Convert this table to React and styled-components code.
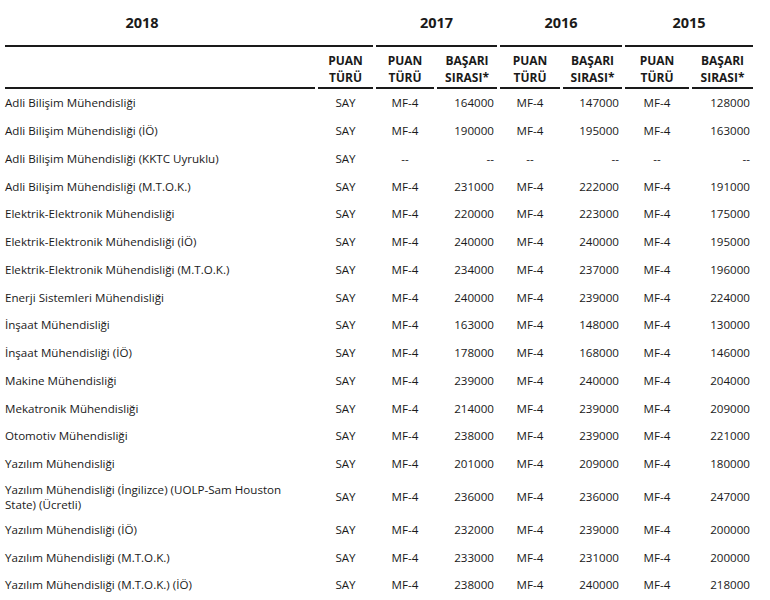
import React from 'react';
import styled, { createGlobalStyle } from 'styled-components';

const GlobalStyle = createGlobalStyle`
  body {
    margin: 0;
    background: #fff;
    font-family: "Open Sans", "Noto Sans", sans-serif;
    color: #1a1a1a;
  }
`;

const Table = styled.table`
  border-collapse: separate;
  border-spacing: 3px 0;
  margin-left: 2px;
  table-layout: fixed;
  font-size: 11.6px;
`;

const YearCell = styled.th`
  height: 45px;
  padding: 0 ${props => props.$shift || 0}px 0 0;
  font-size: 14.5px;
  font-weight: 700;
  text-align: center;
  vertical-align: middle;
  border-bottom: 2px solid #1a1a1a;
`;

const LabelCell = styled.th`
  height: 37px;
  padding: 3px 0 0;
  font-size: 12px;
  font-weight: 700;
  line-height: 17px;
  text-align: center;
  vertical-align: middle;
  border-bottom: 2px solid #1a1a1a;
`;

const Row = styled.tr`
  height: 27.75px;
`;

const Cell = styled.td`
  padding: 4px ${props => (props.$align === 'right' ? '3px' : '0')} 4px 0;
  line-height: 15px;
  text-align: ${props => props.$align || 'center'};
  vertical-align: middle;
  white-space: ${props => (props.$wrap ? 'normal' : 'nowrap')};
`;

const rows = [
  ['Adli Bilişim Mühendisliği', 164000, 147000, 128000],
  ['Adli Bilişim Mühendisliği (İÖ)', 190000, 195000, 163000],
  ['Adli Bilişim Mühendisliği (KKTC Uyruklu)', null, null, null],
  ['Adli Bilişim Mühendisliği (M.T.O.K.)', 231000, 222000, 191000],
  ['Elektrik-Elektronik Mühendisliği', 220000, 223000, 175000],
  ['Elektrik-Elektronik Mühendisliği (İÖ)', 240000, 240000, 195000],
  ['Elektrik-Elektronik Mühendisliği (M.T.O.K.)', 234000, 237000, 196000],
  ['Enerji Sistemleri Mühendisliği', 240000, 239000, 224000],
  ['İnşaat Mühendisliği', 163000, 148000, 130000],
  ['İnşaat Mühendisliği (İÖ)', 178000, 168000, 146000],
  ['Makine Mühendisliği', 239000, 240000, 204000],
  ['Mekatronik Mühendisliği', 214000, 239000, 209000],
  ['Otomotiv Mühendisliği', 238000, 239000, 221000],
  ['Yazılım Mühendisliği', 201000, 209000, 180000],
  ['Yazılım Mühendisliği (İngilizce) (UOLP-Sam Houston State) (Ücretli)', 236000, 236000, 247000],
  ['Yazılım Mühendisliği (İÖ)', 232000, 239000, 200000],
  ['Yazılım Mühendisliği (M.T.O.K.)', 233000, 231000, 200000],
  ['Yazılım Mühendisliği (M.T.O.K.) (İÖ)', 238000, 240000, 218000],
];

const widths = [310, 55, 58, 60, 60, 59, 64, 61];

export default function App() {
  return (
    <>
      <GlobalStyle />
      <Table>
        <colgroup>
          {widths.map((w, i) => <col key={i} style={{ width: w }} />)}
        </colgroup>
        <thead>
          <tr>
            <YearCell colSpan={2} $shift={94}>2018</YearCell>
            <YearCell colSpan={2}>2017</YearCell>
            <YearCell colSpan={2}>2016</YearCell>
            <YearCell colSpan={2}>2015</YearCell>
          </tr>
          <tr>
            <LabelCell />
            <LabelCell>PUAN<br />TÜRÜ</LabelCell>
            {[0, 1, 2].map(i => (
              <React.Fragment key={i}>
                <LabelCell>PUAN<br />TÜRÜ</LabelCell>
                <LabelCell>BAŞARI<br />SIRASI*</LabelCell>
              </React.Fragment>
            ))}
          </tr>
        </thead>
        <tbody>
          {rows.map(([name, ...ranks]) => (
            <Row key={name}>
              <Cell $align="left" $wrap>{name}</Cell>
              <Cell>SAY</Cell>
              {ranks.map((r, i) => (
                <React.Fragment key={i}>
                  <Cell>{r ? 'MF-4' : '--'}</Cell>
                  <Cell $align="right">{r || '--'}</Cell>
                </React.Fragment>
              ))}
            </Row>
          ))}
        </tbody>
      </Table>
    </>
  );
}
